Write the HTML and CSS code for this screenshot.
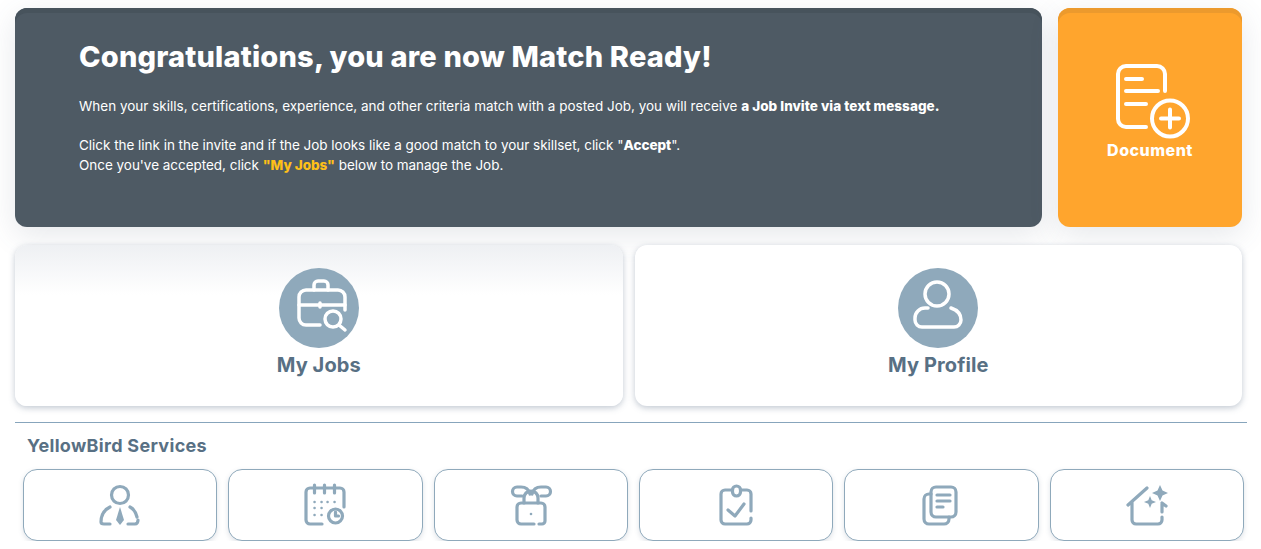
FILE: index.html
```html
<!DOCTYPE html>
<html lang="en">
<head>
    <meta charset="UTF-8">
    <meta name="viewport" content="width=device-width, initial-scale=1.0">
    <title>Dashboard</title>
    <link rel="stylesheet" href="styles.css">
</head>
<body>
    <div class="page">
        <div class="top_row">
            <div class="hero">
                <h1>Congratulations, you are now Match Ready!</h1>
                <p class="hero_one">When your skills, certifications, experience, and other criteria match with a posted Job, you will receive <b>a Job Invite via text message.</b></p>
                <p class="hero_two">Click the link in the invite and if the Job looks like a good match to your skillset, click "<b>Accept</b>".<br>Once you've accepted, click <b class="yellow">"My Jobs"</b> below to manage the Job.</p>
            </div>
            <a class="doc_card" href="#">
                <svg class="doc_icon" viewBox="0 0 80 78" fill="none" stroke="#fff" stroke-width="4" stroke-linecap="round" stroke-linejoin="round">
                    <path d="M52 29V12a8 8 0 0 0-8-8H13a8 8 0 0 0-8 8v45a8 8 0 0 0 8 8h20"/>
                    <path d="M13 17h16M13 29h32M13 42h20"/>
                    <circle cx="57" cy="56.500" r="18"/>
                    <path d="M57 47.500v18M48 56.500h18"/>
                </svg>
                <span>Document</span>
            </a>
        </div>

        <div class="main_row">
            <a class="main_card first" href="#">
                <span class="circle">
                    <svg viewBox="0 0 80 80" fill="none" stroke="#fff" stroke-width="3.500" stroke-linecap="round" stroke-linejoin="round">
                        <path d="M41 57H27a7 7 0 0 1-7-7V29a7 7 0 0 1 7-7h32a7 7 0 0 1 7 7v13"/>
                        <path d="M35 22v-5a4 4 0 0 1 4-4h6a4 4 0 0 1 4 4v5"/>
                        <path d="M20 37h19M43 37h23M41 35v4"/>
                        <circle cx="54" cy="51" r="8"/>
                        <path d="M60 57l6 5"/>
                    </svg>
                </span>
                <span class="main_label">My Jobs</span>
            </a>
            <a class="main_card" href="#">
                <span class="circle">
                    <svg viewBox="0 0 80 80" fill="none" stroke="#fff" stroke-width="3.500" stroke-linecap="round" stroke-linejoin="round">
                        <circle cx="39" cy="26" r="12"/>
                        <path d="M30 40h-3a10 10 0 0 0-10 10v2a7 7 0 0 0 7 7h32a7 7 0 0 0 7-7c0-6-4-10-10-12"/>
                    </svg>
                </span>
                <span class="main_label">My Profile</span>
            </a>
        </div>

        <div class="line"></div>
        <h2>YellowBird Services</h2>

        <div class="service_row">
            <a class="service" href="#">
                <svg viewBox="0 0 44 44">
                    <circle cx="22" cy="12" r="8.500"/>
                    <path d="M12 24C6 27 3 33 3 39c0 1 1 2 3 2h6M32 24c4 2 6 6 7 10M30 41h7c2 0 3-2 3-4"/>
                    <path class="fill" d="M22 24l4 13-4 5-4-5z"/>
                </svg>
            </a>
            <a class="service" href="#">
                <svg viewBox="0 0 44 44">
                    <path d="M19 41H7a4 4 0 0 1-4-4V9a4 4 0 0 1 4-4h30a4 4 0 0 1 4 4v15"/>
                    <path d="M11.500 2v8M21.500 2v8M31.500 2v8"/>
                    <path class="dots" d="M11.500 19h.1M18.500 19h.1M24.500 19h.1M31.500 19h.1M11.500 25h.1M18.500 25h.1M11.500 32h.1M18.500 32h.1"/>
                    <circle cx="32.500" cy="33" r="7"/>
                    <path d="M32.500 29v4h3"/>
                </svg>
            </a>
            <a class="service" href="#">
                <svg viewBox="0 0 44 44">
                    <path d="M30 41h3a3 3 0 0 0 3-3V24a4 4 0 0 0-4-4H12a4 4 0 0 0-4 4v13a4 4 0 0 0 4 4h13"/>
                    <path d="M15 20v-5c0-4 3-7 7-7s7 3 7 7v5"/>
                    <path d="M21 11c-1-4-4-7-9-7H8a4 4 0 0 0 0 9h5M23 11c1-4 4-7 9-7h5a4 4 0 0 1 0 9h-5"/>
                    <circle class="fill" cx="22" cy="31" r="1.300"/>
                </svg>
            </a>
            <a class="service" href="#">
                <svg viewBox="0 0 44 44">
                    <path d="M18 7h-7a4 4 0 0 0-4 4v26a4 4 0 0 0 4 4h22a4 4 0 0 0 4-4v-2M37 28V11a4 4 0 0 0-4-4h-6"/>
                    <rect x="18.500" y="3" width="8" height="10" rx="4"/>
                    <path d="M14 27l7 6 9-12"/>
                </svg>
            </a>
            <a class="service" href="#">
                <svg viewBox="0 0 44 44">
                    <rect x="12" y="4" width="25" height="30" rx="5"/>
                    <path d="M12 11H10a5 5 0 0 0-5 5v20a5 5 0 0 0 5 5h15a5 5 0 0 0 5-5v-2"/>
                    <path d="M18 12h13M18 18h13M18 24h6"/>
                </svg>
            </a>
            <a class="service" href="#">
                <svg viewBox="0 0 44 44">
                    <path d="M3 22L22 5M7 19v18a4 4 0 0 0 4 4h22a4 4 0 0 0 4-4v-3"/>
                    <path d="M37 29v-8M37 20l4 3"/>
                    <path class="fill" d="M35 2l2.500 5.500 5.500 2.500-5.500 2.500-2.500 5.500-2.500-5.500-5.500-2.500 5.500-2.500z"/>
                    <path class="fill" d="M25 13l1.700 4.300 4.300 1.700-4.300 1.700-1.700 4.300-1.700-4.300-4.300-1.700 4.300-1.700z"/>
                </svg>
            </a>
        </div>
    </div>
</body>
</html>
```

FILE: styles.css
```css
*{
    margin: 0px;
    padding: 0px;
    box-sizing: border-box;
}
body{
    background: #fff;
    font-family: "Inter", "Liberation Sans", sans-serif;
    overflow: hidden;
}
a{
    text-decoration: none;
}
.page{
    padding: 8px 14px 0px 15px;
}
.top_row{
    display: grid;
    grid-template-columns: 1027px 184px;
    gap: 16px;
}
.hero{
    height: 219px;
    padding: 29px 0px 0px 64px;
    background: #4e5a64;
    color: #fff;
    border-radius: 12px;
    box-shadow: inset 0 5px 0 #47535c, 0 8px 30px rgba(80, 95, 110, 0.14);
}
.hero h1{
    font-size: 29px;
    line-height: 40px;
    font-weight: 800;
    letter-spacing: 0.18px;
}
.hero p{
    font-size: 13.500px;
    line-height: 19.500px;
}
.hero_one{
    margin-top: 20px;
}
.hero_one b{
    letter-spacing: 0.05px;
}
.hero_two{
    margin-top: 19.500px;
    letter-spacing: -0.03px;
}
.hero b{
    font-weight: 800;
}
.yellow{
    color: #ffc018;
}
.doc_card{
    height: 219px;
    padding-top: 54px;
    display: flex;
    flex-direction: column;
    align-items: center;
    background: #ffa52d;
    color: #fff;
    border-radius: 12px;
    font-size: 16px;
    font-weight: 800;
    letter-spacing: 0.5px;
    box-shadow: inset 0 5px 0 #ec9a2d, 0 8px 30px rgba(80, 95, 110, 0.14);
}
.doc_icon{
    width: 80px;
    height: 78px;
    margin-left: 6px;
}
.doc_card span{
    margin-top: -2px;
    line-height: 24px;
}
.main_row{
    display: grid;
    grid-template-columns: 1fr 1fr;
    gap: 12px;
    width: 1227px;
    margin-top: 18px;
}
.main_card{
    height: 161px;
    padding-top: 23px;
    display: flex;
    flex-direction: column;
    align-items: center;
    background: #fff;
    border-radius: 12px;
    box-shadow: 0 2px 6px rgba(80, 100, 125, 0.35);
}
.main_card.first{
    background: linear-gradient(#eef0f3, #fff 50px);
}
.circle{
    width: 80px;
    height: 80px;
    border-radius: 50%;
    background: #8fa9bb;
}
.circle svg{
    display: block;
    width: 80px;
    height: 80px;
}
.main_label{
    margin-top: 2px;
    font-size: 20px;
    line-height: 30px;
    font-weight: 700;
    letter-spacing: 0.1px;
    color: #587084;
}
.line{
    width: 1232px;
    height: 1px;
    margin-top: 16px;
    background: #87a5bc;
}
.page h2{
    margin: 11px 0px 0px 12px;
    font-size: 18px;
    line-height: 24px;
    font-weight: 700;
    letter-spacing: 0.3px;
    color: #587084;
}
.service_row{
    display: grid;
    grid-template-columns: repeat(6, 1fr);
    gap: 11px;
    width: 1221px;
    margin: 11px 0px 0px 8px;
}
.service{
    height: 72px;
    display: flex;
    align-items: center;
    justify-content: center;
    background: #fff;
    border: 1px solid #8fa9bb;
    border-radius: 14px;
    box-shadow: 0 2px 5px rgba(80, 100, 125, 0.18);
}
.service svg{
    width: 44px;
    height: 44px;
    fill: none;
    stroke: #8fa9bb;
    stroke-width: 3.200;
    stroke-linecap: round;
    stroke-linejoin: round;
}
.service svg .fill{
    fill: #8fa9bb;
    stroke: none;
}
.service svg .dots{
    stroke-width: 2.500;
}
```
